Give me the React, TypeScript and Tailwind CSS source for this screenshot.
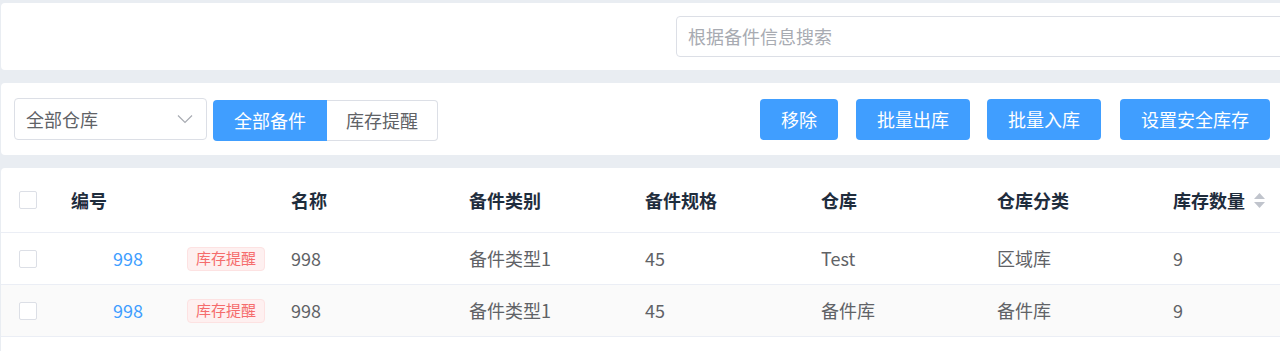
const font = { fontFamily: '"Noto Sans CJK SC", "Noto Sans", sans-serif' };

const cols = [
  { key: "name", label: "名称", w: "w-[178px]" },
  { key: "type", label: "备件类别", w: "w-[176px]" },
  { key: "spec", label: "备件规格", w: "w-[176px]" },
  { key: "wh", label: "仓库", w: "w-[176px]" },
  { key: "whType", label: "仓库分类", w: "w-[176px]" },
];

const rows = [
  { code: "998", name: "998", type: "备件类型1", spec: "45", wh: "Test", whType: "区域库", qty: "9" },
  { code: "998", name: "998", type: "备件类型1", spec: "45", wh: "备件库", whType: "备件库", qty: "9" },
];

function Checkbox() {
  return <span className="block h-[18px] w-[18px] rounded-[2px] border border-[#dcdfe6] bg-white" />;
}

function SortCaret() {
  return (
    <svg width="13" height="17" viewBox="0 0 13 17" className="ml-[8px]">
      <path d="M6.5 1 L12 7 L1 7 Z" fill="#c0c4cc" />
      <path d="M6.5 16 L12 10 L1 10 Z" fill="#c0c4cc" />
    </svg>
  );
}

export default function App() {
  return (
    <div className="h-[351px] w-[1280px] overflow-hidden bg-[#e9edf2] pl-[1px] pt-[3px]" style={font}>
      {/* search */}
      <div className="flex h-[67px] w-[1290px] items-center overflow-hidden rounded-[4px] bg-white pl-[675px]">
        <div className="flex h-[41px] w-[640px] shrink-0 items-center rounded-[4px] border border-[#dcdfe6] px-[11px] text-[18px] text-[#a8abb2]">
          根据备件信息搜索
        </div>
      </div>

      {/* toolbar */}
      <div className="mt-[13px] flex h-[72px] w-[1290px] items-center rounded-[4px] bg-white pl-[13px] pr-[21px]">
        <div className="flex h-[42px] w-[193px] items-center justify-between rounded-[4px] border border-[#dcdfe6] pl-[11px] pr-[13px] text-[18px] text-[#606266]">
          <span>全部仓库</span>
          <svg width="16" height="10" viewBox="0 0 16 10" fill="none">
            <path d="M1 1.5 L8 8.5 L15 1.5" stroke="#a8abb2" strokeWidth="1.2" />
          </svg>
        </div>
        <div className="ml-[6px] mt-[2px] flex h-[41px] text-[18px]">
          <button className="w-[114px] rounded-l-[4px] bg-[#409eff] text-white">全部备件</button>
          <button className="w-[111px] rounded-r-[4px] border border-l-0 border-[#dcdfe6] bg-white text-[#606266]">库存提醒</button>
        </div>
        <div className="ml-auto flex text-[18px] text-white">
          <button className="h-[41px] w-[78px] rounded-[4px] bg-[#409eff]">移除</button>
          <button className="ml-[18px] h-[41px] w-[114px] rounded-[4px] bg-[#409eff]">批量出库</button>
          <button className="ml-[17px] h-[41px] w-[114px] rounded-[4px] bg-[#409eff]">批量入库</button>
          <button className="ml-[19px] h-[41px] w-[150px] rounded-[4px] bg-[#409eff]">设置安全库存</button>
        </div>
      </div>

      {/* table */}
      <div className="mt-[13px] h-[200px] w-[1290px] rounded-t-[4px] bg-white text-[18px]">
        <div className="flex h-[65px] items-center border-b border-[#ebeef5] font-bold text-[#1f2d3d]">
          <div className="w-[54px] pl-[18px]">
            <Checkbox />
          </div>
          <div className="w-[236px] pl-[16px]">编号</div>
          {cols.map((c) => (
            <div key={c.key} className={c.w}>
              {c.label}
            </div>
          ))}
          <div className="flex items-center">
            库存数量
            <SortCaret />
          </div>
        </div>
        {rows.map((r, i) => (
          <div
            key={i}
            className={`flex h-[52px] items-center border-b border-[#ebeef5] text-[#606266] ${i === 1 ? "bg-[#fafafa]" : ""}`}
          >
            <div className="w-[54px] pl-[18px]">
              <Checkbox />
            </div>
            <div className="flex w-[236px] items-center pl-[16px]">
              <span className="w-[72px] text-right text-[#409eff]">{r.code}</span>
              <span className="ml-[44px] flex h-[24px] items-center rounded-[4px] border border-[#fde2e2] bg-[#fef0f0] px-[8px] text-[15px] text-[#f56c6c]">
                库存提醒
              </span>
            </div>
            {cols.map((c) => (
              <div key={c.key} className={c.w}>
                {r[c.key as keyof typeof r]}
              </div>
            ))}
            <div>{r.qty}</div>
          </div>
        ))}
      </div>
    </div>
  );
}
